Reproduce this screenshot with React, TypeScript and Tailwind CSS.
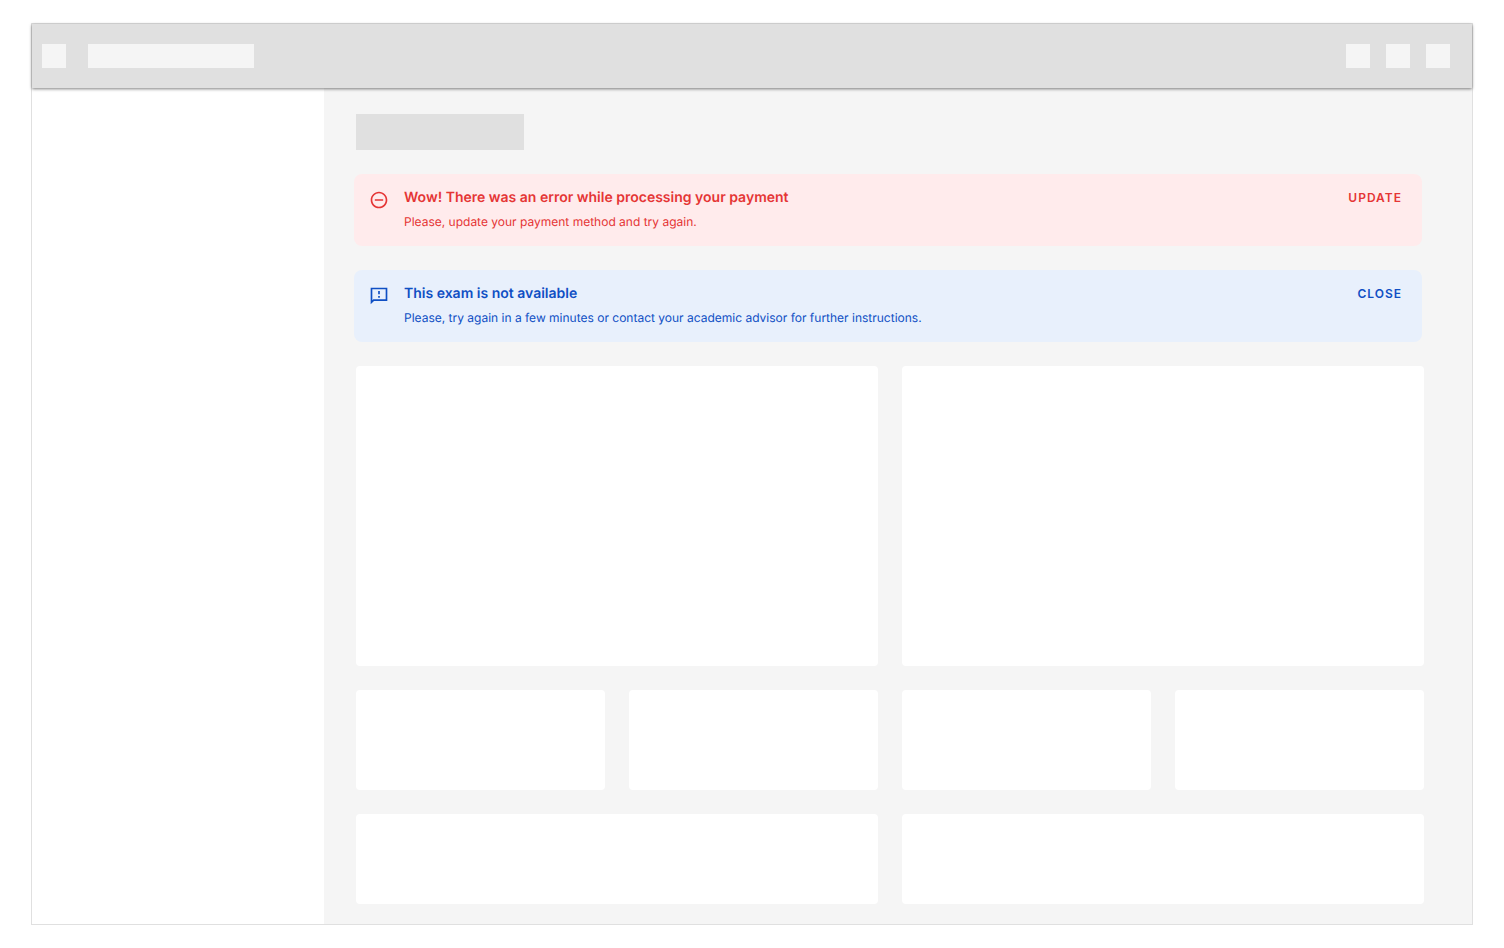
const font = { fontFamily: "Inter, 'Noto Sans', sans-serif" };

function ErrorIcon() {
  return (
    <svg viewBox="0 0 24 24" className="h-5 w-5 shrink-0 fill-current">
      <path d="M7 11v2h10v-2H7zm5-9C6.48 2 2 6.48 2 12s4.48 10 10 10 10-4.48 10-10S17.52 2 12 2zm0 18c-4.41 0-8-3.59-8-8s3.59-8 8-8 8 3.59 8 8-3.59 8-8 8z" />
    </svg>
  );
}

function InfoIcon() {
  return (
    <svg viewBox="0 0 24 24" className="h-5 w-5 shrink-0 fill-current">
      <path d="M22 2H2v20l4-4h16V2zm-2 14H5.17L4 17.17V4h16v12zm-9-4h2v2h-2zm0-6h2v4h-2z" />
    </svg>
  );
}

interface AlertProps {
  icon: React.ReactNode;
  title: string;
  text: string;
  action: string;
  className: string;
}

function Alert({ icon, title, text, action, className }: AlertProps) {
  return (
    <div className={`-ml-0.5 flex h-[72px] w-[1068px] rounded-lg pl-[15px] pr-5 ${className}`}>
      <div className="pt-4">{icon}</div>
      <div className="ml-[15px] flex-1 pt-[13px]">
        <div className="text-sm/[22px] font-semibold">{title}</div>
        <div className="mt-0.5 text-xs/[22px]">{text}</div>
      </div>
      <button className="mt-[13px] h-[22px] text-xs/[22px] font-semibold tracking-[1px]">{action}</button>
    </div>
  );
}

function Card({ className }: { className: string }) {
  return <div className={`rounded bg-white ${className}`} />;
}

export default function App() {
  return (
    <div className="h-[948px] bg-white pl-[31px] pt-[23px] antialiased [text-rendering:geometricPrecision]" style={font}>
      <div className="flex h-[902px] w-[1442px] flex-col border border-[#e0e0e0] bg-white">
        <header className="relative z-10 flex h-16 shrink-0 items-center bg-[#e0e0e0] pl-2.5 pr-[22px] shadow-[0_1px_3px_rgba(0,0,0,0.5)]">
          <div className="h-6 w-6 bg-[#f5f5f5]" />
          <div className="ml-[22px] h-6 w-[166px] bg-[#f5f5f5]" />
          <div className="ml-auto flex gap-4">
            <div className="h-6 w-6 bg-[#f5f5f5]" />
            <div className="h-6 w-6 bg-[#f5f5f5]" />
            <div className="h-6 w-6 bg-[#f5f5f5]" />
          </div>
        </header>
        <div className="flex min-h-0 flex-1">
          <aside className="w-[292px] shrink-0 bg-white" />
          <main className="flex-1 bg-[#f5f5f5] pl-8 pr-12 pt-[26px]">
            <div className="h-9 w-[168px] bg-[#e0e0e0]" />
            <div className="mt-6 flex flex-col gap-6">
              <Alert
                icon={<ErrorIcon />}
                title="Wow! There was an error while processing your payment"
                text="Please, update your payment method and try again."
                action="UPDATE"
                className="bg-[#ffebec] text-[#e53535]"
              />
              <Alert
                icon={<InfoIcon />}
                title="This exam is not available"
                text="Please, try again in a few minutes or contact your academic advisor for further instructions."
                action="CLOSE"
                className="bg-[#e8f0fc] text-[#0f4fc4]"
              />
              <div className="grid grid-cols-2 gap-6">
                <Card className="h-[300px]" />
                <Card className="h-[300px]" />
              </div>
              <div className="grid grid-cols-4 gap-6">
                <Card className="h-[100px]" />
                <Card className="h-[100px]" />
                <Card className="h-[100px]" />
                <Card className="h-[100px]" />
              </div>
              <div className="grid grid-cols-2 gap-6">
                <Card className="h-[90px]" />
                <Card className="h-[90px]" />
              </div>
            </div>
          </main>
        </div>
      </div>
    </div>
  );
}
